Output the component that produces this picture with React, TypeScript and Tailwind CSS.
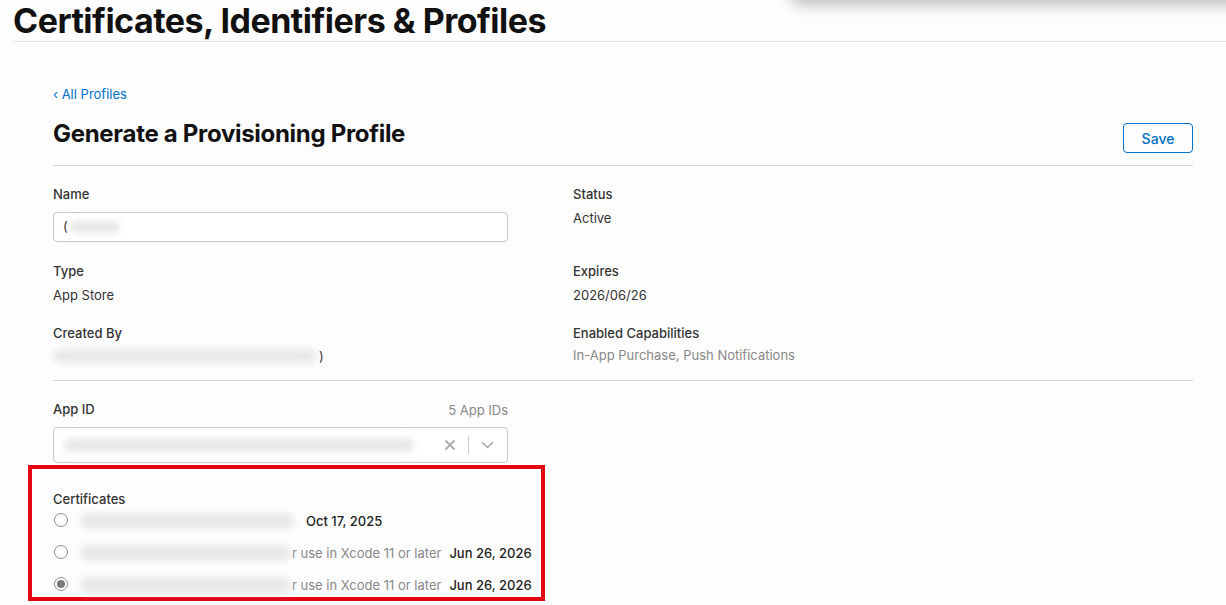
import React from 'react';

const Blur = ({ className = '' }: { className?: string }) => (
  <span className={`inline-block rounded-full bg-[#e8e8e8] blur-[3px] ${className}`} />
);

const Radio = ({ checked = false }: { checked?: boolean }) => (
  <span className="w-[14px] h-[14px] rounded-full border border-[#8a8a8a] bg-white flex items-center justify-center shrink-0">
    {checked && <span className="w-[8px] h-[8px] rounded-full bg-[#7a7a7a]" />}
  </span>
);

const Field = ({ label, children }: { label: string; children: React.ReactNode }) => (
  <div className="flex flex-col">
    <div className="text-[13px] leading-[20px] font-medium text-[#333]">{label}</div>
    {children}
  </div>
);

export default function App() {
  return (
    <div className="relative w-full h-[605px] overflow-hidden bg-[#fdfdfd] text-[#333] font-['Inter','Noto_Sans',sans-serif]">
      <div className="absolute top-[-24px] left-[790px] right-[-30px] h-[24px] rounded-[12px] bg-white shadow-[0_4px_16px_rgba(0,0,0,0.28)]" />

      <div className="ml-[13px] h-[42px] border-b border-[#e2e2e2]">
        <h1 className="text-[34px] leading-[42px] font-bold tracking-[-0.5px] text-[#111]">
          Certificates, Identifiers &amp; Profiles
        </h1>
      </div>

      <div className="pl-[53px] pr-[33px]">
        <a className="block mt-[42px] text-[13px] leading-[20px] text-[#0070c9]">‹ All Profiles</a>

        <div className="mt-[15px] flex items-start justify-between pb-[12px] border-b border-[#d6d6d6]">
          <h2 className="text-[24px] leading-[30px] font-bold tracking-[-0.3px] text-[#111]">
            Generate a Provisioning Profile
          </h2>
          <button className="mt-[4px] h-[30px] w-[70px] rounded-[4px] border border-[#0070c9] text-[14px] font-medium text-[#0070c9]">
            Save
          </button>
        </div>

        <div className="grid grid-cols-[520px_1fr] pt-[18px] pb-[14px] border-b border-[#d6d6d6] text-[13px]">
          <Field label="Name">
            <div className="mt-[8px] w-[455px] h-[30px] rounded-[4px] border border-[#c8c8c8] bg-white flex items-center pl-[9px]">
              <span>(</span>
              <Blur className="ml-[2px] w-[50px] h-[12px]" />
            </div>
          </Field>
          <Field label="Status">
            <div className="mt-[4px] leading-[20px]">Active</div>
          </Field>

          <div className="mt-[19px]">
            <Field label="Type">
              <div className="mt-[4px] leading-[20px]">App Store</div>
            </Field>
          </div>
          <div className="mt-[19px]">
            <Field label="Expires">
              <div className="mt-[4px] leading-[20px]">2026/06/26</div>
            </Field>
          </div>

          <div className="mt-[18px]">
            <Field label="Created By">
              <div className="mt-[3px] flex items-center leading-[20px]">
                <Blur className="w-[263px] h-[14px]" />
                <span className="ml-[3px]">)</span>
              </div>
            </Field>
          </div>
          <div className="mt-[18px]">
            <Field label="Enabled Capabilities">
              <div className="mt-[2px] leading-[20px] text-[#888]">In-App Purchase, Push Notifications</div>
            </Field>
          </div>
        </div>

        <div className="mt-[17px] w-[455px] text-[13px]">
          <div className="flex items-center justify-between">
            <span className="leading-[20px] font-medium">App ID</span>
            <span className="leading-[20px] text-[#888] mt-[2px]">5 App IDs</span>
          </div>
          <div className="mt-[7px] h-[36px] rounded-[4px] border border-[#c8c8c8] bg-white flex items-center pl-[10px]">
            <Blur className="w-[350px] h-[14px]" />
            <span className="ml-auto text-[#aaa]">
              <svg width="12" height="12" viewBox="0 0 12 12" fill="none" stroke="currentColor" strokeWidth="1.8" strokeLinecap="round">
                <path d="M2 2l8 8M10 2l-8 8" />
              </svg>
            </span>
            <span className="ml-[12px] w-px h-[18px] bg-[#ccc]" />
            <span className="ml-[12px] mr-[13px] text-[#aaa]">
              <svg width="13" height="8" viewBox="0 0 13 8" fill="none" stroke="currentColor" strokeWidth="1.6" strokeLinecap="round" strokeLinejoin="round">
                <path d="M1.5 1.5l5 5 5-5" />
              </svg>
            </span>
          </div>
        </div>

        <div className="ml-[-25px] mt-[2px] w-[517px] h-[136px] border-4 border-[#e30613] pl-[21px] pt-[20px] text-[13px]">
          <div className="leading-[20px] font-medium">Certificates</div>
          <div className="mt-[2px] flex flex-col gap-[12px] leading-[20px]">
            <div className="flex items-center">
              <span className="ml-[1px] -mt-[2px]"><Radio /></span>
              <Blur className="ml-[13px] w-[213px] h-[16px]" />
              <span className="ml-[12px] font-medium text-[#222]">Oct 17, 2025</span>
            </div>
            <div className="flex items-center">
              <span className="ml-[1px] -mt-[2px]"><Radio /></span>
              <Blur className="ml-[13px] w-[210px] h-[16px]" />
              <span className="ml-[1px] text-[#888] whitespace-nowrap">r use in Xcode 11 or later</span>
              <span className="ml-[8px] font-medium text-[#222] whitespace-nowrap">Jun 26, 2026</span>
            </div>
            <div className="flex items-center">
              <span className="ml-[1px] -mt-[2px]"><Radio checked /></span>
              <Blur className="ml-[13px] w-[210px] h-[16px]" />
              <span className="ml-[1px] text-[#888] whitespace-nowrap">r use in Xcode 11 or later</span>
              <span className="ml-[8px] font-medium text-[#222] whitespace-nowrap">Jun 26, 2026</span>
            </div>
          </div>
        </div>
      </div>
    </div>
  );
}
